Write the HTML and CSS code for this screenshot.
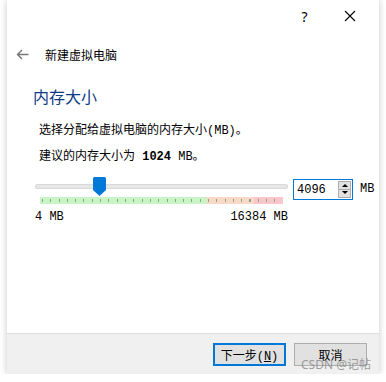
FILE: index.html
```html
<!DOCTYPE html>
<html lang="zh-CN">
<head>
    <meta charset="UTF-8">
    <title>新建虚拟电脑</title>
    <link rel="stylesheet" href="styles.css">
</head>
<body>
    <div class="window">
        <div class="titlebar">
            <span class="tb-btn help">?</span>
            <span class="tb-btn">
                <svg width="12" height="12" viewBox="0 0 12 12"><path d="M1 1 L11 11 M11 1 L1 11" stroke="#000" stroke-width="1.1" fill="none"/></svg>
            </span>
        </div>

        <div class="nav">
            <svg class="back" width="13" height="11" viewBox="0 0 13 11"><path d="M6 1 L1.5 5.5 L6 10 M1.5 5.5 H12.5" stroke="#777" stroke-width="1.4" fill="none"/></svg>
            <span class="nav-title">新建虚拟电脑</span>
        </div>

        <div class="page">
            <h1 class="heading">内存大小</h1>
            <p class="line">选择分配给虚拟电脑的内存大小(MB)。</p>
            <p class="line">建议的内存大小为 <b>1024</b> MB。</p>

            <div class="mem-row">
                <div class="slider">
                    <div class="track"></div>
                    <svg class="thumb" width="13" height="19" viewBox="0 0 13 19"><path d="M0 1.5 Q0 0 1.5 0 H11.5 Q13 0 13 1.5 V13 L6.5 19 L0 13 Z" fill="#0078d7"/></svg>
                    <div class="scale">
                        <div class="zone green"></div>
                        <div class="zone orange"></div>
                        <div class="zone red"></div>
                    </div>
                    <div class="limits">
                        <span>4 MB</span>
                        <span>16384 MB</span>
                    </div>
                </div>
                <div class="spin">
                    <span class="spin-value">4096</span>
                    <div class="spin-btns">
                        <span class="arrow up"></span>
                        <span class="arrow down"></span>
                    </div>
                </div>
                <span class="unit">MB</span>
            </div>
        </div>

        <div class="footer">
            <button class="btn primary">下一步(<u>N</u>)</button>
            <button class="btn">取消</button>
            <span class="watermark">CSDN @记帖</span>
        </div>
    </div>
</body>
</html>
```

FILE: styles.css
```css
html, body {
    margin: 0;
    background: #fff;
}
body {
    font-family: "Liberation Mono", "Noto Sans CJK SC", monospace;
    font-size: 12px;
    color: #000;
}
.window {
    position: relative;
    margin-left: 7px;
    width: 372px;
    height: 374px;
    background: #fff;
    box-shadow: 0 0 7px rgba(0,0,0,0.22);
    display: flex;
    flex-direction: column;
}
.titlebar {
    height: 32px;
    display: flex;
    justify-content: flex-end;
    align-items: center;
    padding-right: 7px;
}
.tb-btn {
    width: 45px;
    height: 30px;
    display: flex;
    align-items: center;
    justify-content: center;
}
.help {
    font-family: "Noto Sans", sans-serif;
    font-size: 14px;
}
.nav {
    margin-top: 12px;
    height: 20px;
    display: flex;
    align-items: center;
    padding-left: 9px;
}
.back {
    margin-right: 16px;
}
.nav-title {
    font-family: "Noto Sans CJK SC", sans-serif;
    font-size: 12px;
}
.page {
    padding-left: 26px;
    flex: 1;
}
.heading {
    margin: 21px 0 0;
    font-family: "Noto Sans CJK SC", sans-serif;
    font-weight: normal;
    font-size: 16px;
    line-height: 22px;
    color: #0c3a86;
}
.line {
    margin: 16px 0 0 6px;
    line-height: 16px;
}
.line + .line {
    margin-top: 10px;
}
.mem-row {
    margin-top: 14px;
    display: flex;
    align-items: flex-start;
}
.slider {
    position: relative;
    width: 253px;
    margin-left: 2px;
    padding-top: 5px;
}
.track {
    height: 3px;
    background: #e7e7e7;
    border: 1px solid #d9d9d9;
    border-radius: 2px;
}
.thumb {
    position: absolute;
    left: 58px;
    top: -2px;
}
.scale {
    position: relative;
    display: flex;
    height: 7px;
    margin: 8px 5px 0 5px;
}
.scale::after {
    content: "";
    position: absolute;
    left: 2px;
    right: 0;
    top: 2px;
    height: 3px;
    background-image: repeating-linear-gradient(90deg, #8fa08f 0 1px, transparent 1px 8.3px);
}
.zone {
    height: 100%;
}
.green { width: 167px; background: #c9f5c6; }
.orange { width: 47px; background: #fad9c6; }
.red { width: 29px; background: #f9c7c9; }
.limits {
    display: flex;
    justify-content: space-between;
    margin-top: 6px;
    line-height: 14px;
}
.spin {
    margin-left: 5px;
    width: 55px;
    height: 19px;
    border: 1px solid #0078d7;
    display: flex;
    align-items: center;
    justify-content: space-between;
    padding-left: 3px;
}
.spin-value {
    line-height: 16px;
}
.spin-btns {
    width: 13px;
    height: 17px;
    margin-right: 1px;
    display: flex;
    flex-direction: column;
}
.arrow {
    flex: 1;
    background: #e1e1e1;
    border: 1px solid #adadad;
    position: relative;
}
.arrow + .arrow {
    border-top: none;
}
.arrow::after {
    content: "";
    position: absolute;
    left: 3px;
    top: 2px;
    border-left: 3px solid transparent;
    border-right: 3px solid transparent;
}
.up::after {
    border-bottom: 3px solid #000;
}
.down::after {
    top: 1px;
    border-top: 3px solid #000;
}
.unit {
    margin-left: 7px;
    line-height: 21px;
}
.footer {
    position: relative;
    height: 41px;
    background: #f0f0f0;
    border-top: 1px solid #dfdfdf;
    display: flex;
    justify-content: flex-end;
    align-items: flex-start;
    padding: 9px 12px 0 0;
    gap: 8px;
    box-sizing: border-box;
}
.btn {
    width: 73px;
    height: 23px;
    background: #e1e1e1;
    border: 1px solid #adadad;
    font-family: "Liberation Mono", "Noto Sans CJK SC", monospace;
    font-size: 12px;
    padding: 0;
    color: #000;
}
.primary {
    border: 2px solid #0078d7;
}
.watermark {
    position: absolute;
    right: 8px;
    bottom: 1px;
    font-family: "Noto Sans", "Noto Sans CJK SC", sans-serif;
    font-size: 12px;
    color: rgba(120,120,120,0.7);
}
```
